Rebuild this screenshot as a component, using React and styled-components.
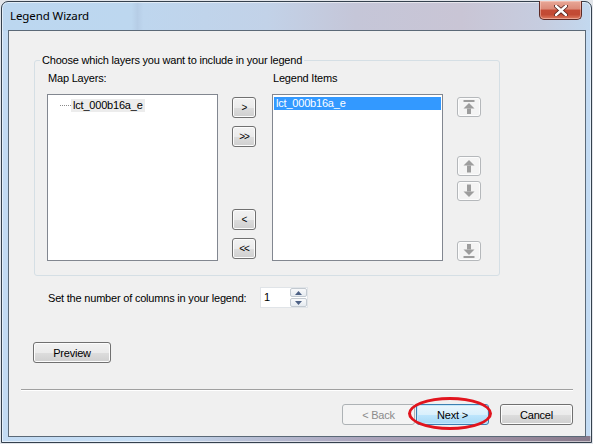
import React from "react";
import styled, { createGlobalStyle } from "styled-components";

const GlobalStyle = createGlobalStyle`
  html, body {
    margin: 0;
    padding: 0;
  }
  body {
    width: 593px;
    height: 444px;
    overflow: hidden;
    background: #e2e5ea;
    font-family: "Liberation Sans", Arial, sans-serif;
    font-size: 11px;
    letter-spacing: -0.2px;
    color: #000;
  }
  * {
    box-sizing: border-box;
  }
`;

const Window = styled.div`
  margin: 1px 0 0 1px;
  width: 591px;
  height: 442px;
  display: flex;
  flex-direction: column;
  padding: 0 5px 5px 6px;
  border: 1px solid #35414e;
  border-radius: 7px 7px 0 0;
  box-shadow: inset 0 0 0 1px rgba(255, 255, 255, 0.55);
  background:
    linear-gradient(90deg, #bcd7f0 0%, #bdd7ef 22%, #b6cde6 23%, #bed6ee 24%, #c2d2e8 45%, #c5c6d8 60%, #c9c5d5 78%, #c6cde0 92%, #c2d8ef 100%) top / 100% 29px no-repeat,
    linear-gradient(90deg, #c3dbf3 0%, #c6def5 24%, #b9c2d8 40%, #aaa3bb 62%, #9a8c9f 85%, #86788a 100%) bottom / 100% 6px no-repeat,
    #c3dbf3;
`;

const TitleBar = styled.div`
  height: 28px;
  flex: none;
  display: flex;
  align-items: flex-start;
  justify-content: space-between;
`;

const Title = styled.span`
  padding-left: 2px;
  line-height: 28px;
  font-family: "Noto Sans", "Open Sans", sans-serif;
  font-size: 11.5px;
  letter-spacing: -0.1px;
  color: #000;
`;

const CloseButton = styled.div`
  width: 43px;
  height: 19px;
  margin: -1px 4px 0 0;
  display: flex;
  align-items: center;
  justify-content: center;
  border: 1px solid #5d2a25;
  border-top: none;
  border-radius: 0 0 5px 5px;
  background: linear-gradient(#e8a898 0%, #dc8a78 45%, #c44b36 50%, #c24a34 75%, #dd7a5f 100%);
  box-shadow: inset 0 0 0 1px rgba(255, 220, 210, 0.45);
`;

const Client = styled.div`
  flex: 1;
  position: relative;
  display: flex;
  flex-direction: column;
  border: 1px solid #5b6977;
  background: #f0f0f0;
  padding-top: 23px;
`;

const Group = styled.fieldset`
  margin: 0 0 0 25px;
  width: 466px;
  padding: 5px 0 14px 12px;
  border: 1px solid #d5dfe5;
  border-radius: 3px;
`;

const GroupTitle = styled.legend`
  margin-left: -7px;
  padding: 0 2px;
  line-height: 13px;
`;

const LayerGrid = styled.div`
  display: grid;
  grid-template-columns: 171px 24px 173px 24px;
  grid-template-rows: 13px 167px;
  column-gap: 14px;
  row-gap: 9px;
`;

const Label = styled.div`
  line-height: 13px;
  padding-left: ${(p) => p.$indent || 1}px;
  white-space: nowrap;
`;

const ListBox = styled.div`
  width: 171px;
  justify-self: end;
  background: #fff;
  border: 1px solid #828790;
  padding: ${(p) => (p.$tree ? "4px 1px" : "2px 1px")};
`;

const TreeRow = styled.div`
  display: flex;
  align-items: center;
  height: 13px;
  padding-left: 11px;
`;

const TreeDots = styled.span`
  width: 11px;
  height: 1px;
  border-top: 1px dotted #8a8a8a;
`;

const TreeText = styled.span`
  padding: 0 2px;
  line-height: 13px;
  background: #ececec;
`;

const ListItem = styled.div`
  height: 13px;
  line-height: 13px;
  padding-left: 2px;
  background: ${(p) => (p.$selected ? "#3399ff" : "transparent")};
  color: ${(p) => (p.$selected ? "#fff" : "#000")};
`;

const MoveColumn = styled.div`
  display: flex;
  flex-direction: column;
  justify-content: space-between;
  padding: 3px 0 2px;
`;

const ButtonPair = styled.div`
  display: flex;
  flex-direction: column;
  gap: 8px;
`;

const SmallButton = styled.div`
  width: 24px;
  height: ${(p) => p.$h || 21}px;
  margin-top: ${(p) => p.$mt || 0}px;
  display: flex;
  align-items: center;
  justify-content: center;
  border: 1px solid ${(p) => (p.$disabled ? "#b5b8bb" : "#707070")};
  border-radius: 3px;
  background: ${(p) =>
    p.$disabled
      ? "#f4f4f4"
      : "linear-gradient(#f2f2f2 0%, #ebebeb 50%, #dddddd 51%, #cfcfcf 100%)"};
  box-shadow: inset 0 0 0 1px #fcfcfc;
  font-size: 10px;
  letter-spacing: -1px;
`;

const OrderColumn = styled.div`
  display: flex;
  flex-direction: column;
  padding-top: 3px;
`;

const ColumnsRow = styled.div`
  display: flex;
  align-items: center;
  margin: 11px 0 0 39px;
  height: 21px;
`;

const ColumnsLabel = styled.span`
  width: 212px;
`;

const Spin = styled.div`
  width: 48px;
  height: 21px;
  display: flex;
  background: #fff;
  border: 1px solid #e0e4e8;
`;

const SpinValue = styled.span`
  flex: 1;
  padding: 3px 0 0 3px;
`;

const SpinButtons = styled.div`
  width: 17px;
  display: flex;
  flex-direction: column;
  gap: 1px;
`;

const SpinArrow = styled.div`
  flex: 1;
  display: flex;
  align-items: center;
  justify-content: center;
  border: 1px solid #c3cad1;
  border-radius: 2px;
  background: linear-gradient(#f8f9fb, #e6ebf0);
`;

const Button = styled.div`
  width: ${(p) => p.$w || 75}px;
  height: 21px;
  display: flex;
  align-items: center;
  justify-content: center;
  border: 1px solid #707070;
  border-radius: 3px;
  background: linear-gradient(#f2f2f2 0%, #ebebeb 50%, #dddddd 51%, #cfcfcf 100%);
  box-shadow: inset 0 0 0 1px #fcfcfc;
  color: #000;

  &[data-variant="disabled"] {
    border-color: #adb2b5;
    background: #f4f4f4;
    box-shadow: none;
    color: #8b8b8b;
  }

  &[data-variant="default"] {
    border-color: #3c7fb1;
    background: linear-gradient(#eaf6fd 0%, #d9f0fc 50%, #bee6fd 51%, #a7d9f5 100%);
    box-shadow: inset 0 0 0 1px #c7e9fb;
  }
`;

const PreviewButton = styled(Button)`
  margin: 34px 0 0 24px;
`;

const Separator = styled.div`
  margin: 26px 12px 0 12px;
  border-top: 1px solid #a0a0a0;
  border-bottom: 1px solid #fff;
`;

const Footer = styled.div`
  display: flex;
  justify-content: flex-end;
  margin: 13px 12px 0 0;
  gap: 11px;
`;

const NavPair = styled.div`
  display: flex;
  gap: 1px;
`;

const Highlight = styled.div`
  position: absolute;
  left: 399px;
  top: 366px;
  width: 84px;
  height: 33px;
  border: 3px solid #e1141d;
  border-radius: 50%;
  pointer-events: none;
`;

const CloseIcon = () => (
  <svg width="14" height="11" viewBox="0 0 14 11">
    <path d="M2 1 L12 10 M12 1 L2 10" stroke="#4a1d18" strokeWidth="4" strokeLinecap="round" />
    <path d="M2 1 L12 10 M12 1 L2 10" stroke="#fff" strokeWidth="2.4" strokeLinecap="round" />
  </svg>
);

const ArrowIcon = ({ dir, bar }) => {
  const up = dir === "up";
  return (
    <svg width="12" height="14" viewBox="0 0 12 14" style={{ transform: up ? "none" : "scaleY(-1)" }}>
      {bar && <rect x="0.5" y="0" width="11" height="2" fill="#9d9d9d" />}
      <polygon points={bar ? "6,3 0.5,8.5 11.5,8.5" : "6,1 0.5,6.5 11.5,6.5"} fill="#9d9d9d" />
      <rect x="4" y={bar ? 8.5 : 6.5} width="4" height={bar ? 5.5 : 7} fill="#9d9d9d" />
    </svg>
  );
};

const SpinGlyph = ({ down }) => (
  <svg width="7" height="4" viewBox="0 0 7 4">
    <polygon points={down ? "0,0 7,0 3.5,4" : "0,4 7,4 3.5,0"} fill="#4d6185" />
  </svg>
);

export default function App() {
  return (
    <>
      <GlobalStyle />
      <Window>
        <TitleBar>
          <Title>Legend Wizard</Title>
          <CloseButton>
            <CloseIcon />
          </CloseButton>
        </TitleBar>
        <Client>
          <Group>
            <GroupTitle>Choose which layers you want to include in your legend</GroupTitle>
            <LayerGrid>
              <Label>Map Layers:</Label>
              <span />
              <Label $indent={3}>Legend Items</Label>
              <span />
              <ListBox $tree>
                <TreeRow>
                  <TreeDots />
                  <TreeText>lct_000b16a_e</TreeText>
                </TreeRow>
              </ListBox>
              <MoveColumn>
                <ButtonPair>
                  <SmallButton>&gt;</SmallButton>
                  <SmallButton>&gt;&gt;</SmallButton>
                </ButtonPair>
                <ButtonPair>
                  <SmallButton>&lt;</SmallButton>
                  <SmallButton>&lt;&lt;</SmallButton>
                </ButtonPair>
              </MoveColumn>
              <ListBox>
                <ListItem $selected>lct_000b16a_e</ListItem>
              </ListBox>
              <OrderColumn>
                <SmallButton $disabled $h={20}>
                  <ArrowIcon dir="up" bar />
                </SmallButton>
                <SmallButton $disabled $h={20} $mt={39}>
                  <ArrowIcon dir="up" />
                </SmallButton>
                <SmallButton $disabled $h={20} $mt={5}>
                  <ArrowIcon dir="down" />
                </SmallButton>
                <SmallButton $disabled $h={20} $mt={40}>
                  <ArrowIcon dir="down" bar />
                </SmallButton>
              </OrderColumn>
            </LayerGrid>
          </Group>

          <ColumnsRow>
            <ColumnsLabel>Set the number of columns in your legend:</ColumnsLabel>
            <Spin>
              <SpinValue>1</SpinValue>
              <SpinButtons>
                <SpinArrow>
                  <SpinGlyph />
                </SpinArrow>
                <SpinArrow>
                  <SpinGlyph down />
                </SpinArrow>
              </SpinButtons>
            </Spin>
          </ColumnsRow>

          <PreviewButton $w={78}>Preview</PreviewButton>

          <Separator />

          <Footer>
            <NavPair>
              <Button data-variant="disabled" $w={73}>&lt; Back</Button>
              <Button data-variant="default" $w={73}>Next &gt;</Button>
            </NavPair>
            <Button $w={73}>Cancel</Button>
          </Footer>

          <Highlight />
        </Client>
      </Window>
    </>
  );
}
